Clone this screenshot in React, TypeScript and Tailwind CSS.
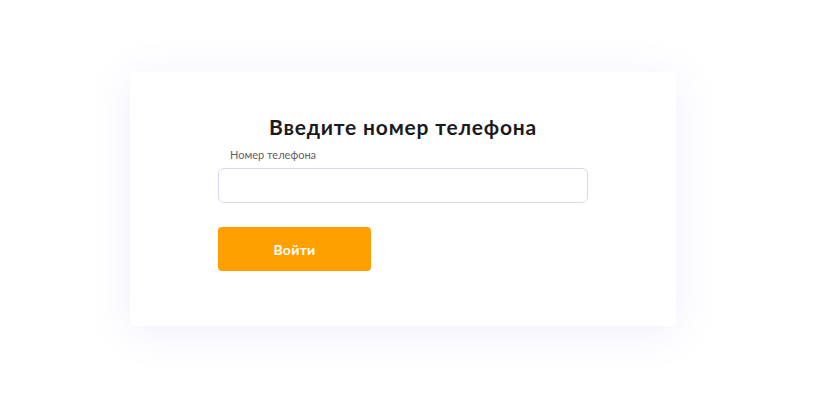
export default function App() {
  return (
    <div
      className="min-h-screen w-full bg-white flex pt-[72px] pl-[130px]"
      style={{ fontFamily: "Lato, 'Noto Sans', sans-serif" }}
    >
      <div className="w-[546px] h-[254px] bg-white rounded-[4px] shadow-[0_6px_40px_rgba(110,90,255,0.10)] px-[88px] pt-[42px]">
        <h1 className="text-center text-[21px] leading-[26px] font-bold tracking-[0.8px] text-[#1b1b1f]">
          Введите номер телефона
        </h1>
        <label className="block mt-[8px] pl-[12px] text-[11px] leading-[14px] text-[#5f5f66]">
          Номер телефона
        </label>
        <input
          type="tel"
          className="block mt-[6px] w-full h-[35px] rounded-[6px] border border-[#dcd6f7] bg-white px-3 text-sm outline-none"
        />
        <button className="mt-[24px] w-[153px] h-[44px] rounded-[4px] bg-[#ffa000] text-white text-[14px] font-bold tracking-[0.3px]">
          Войти
        </button>
      </div>
    </div>
  );
}
